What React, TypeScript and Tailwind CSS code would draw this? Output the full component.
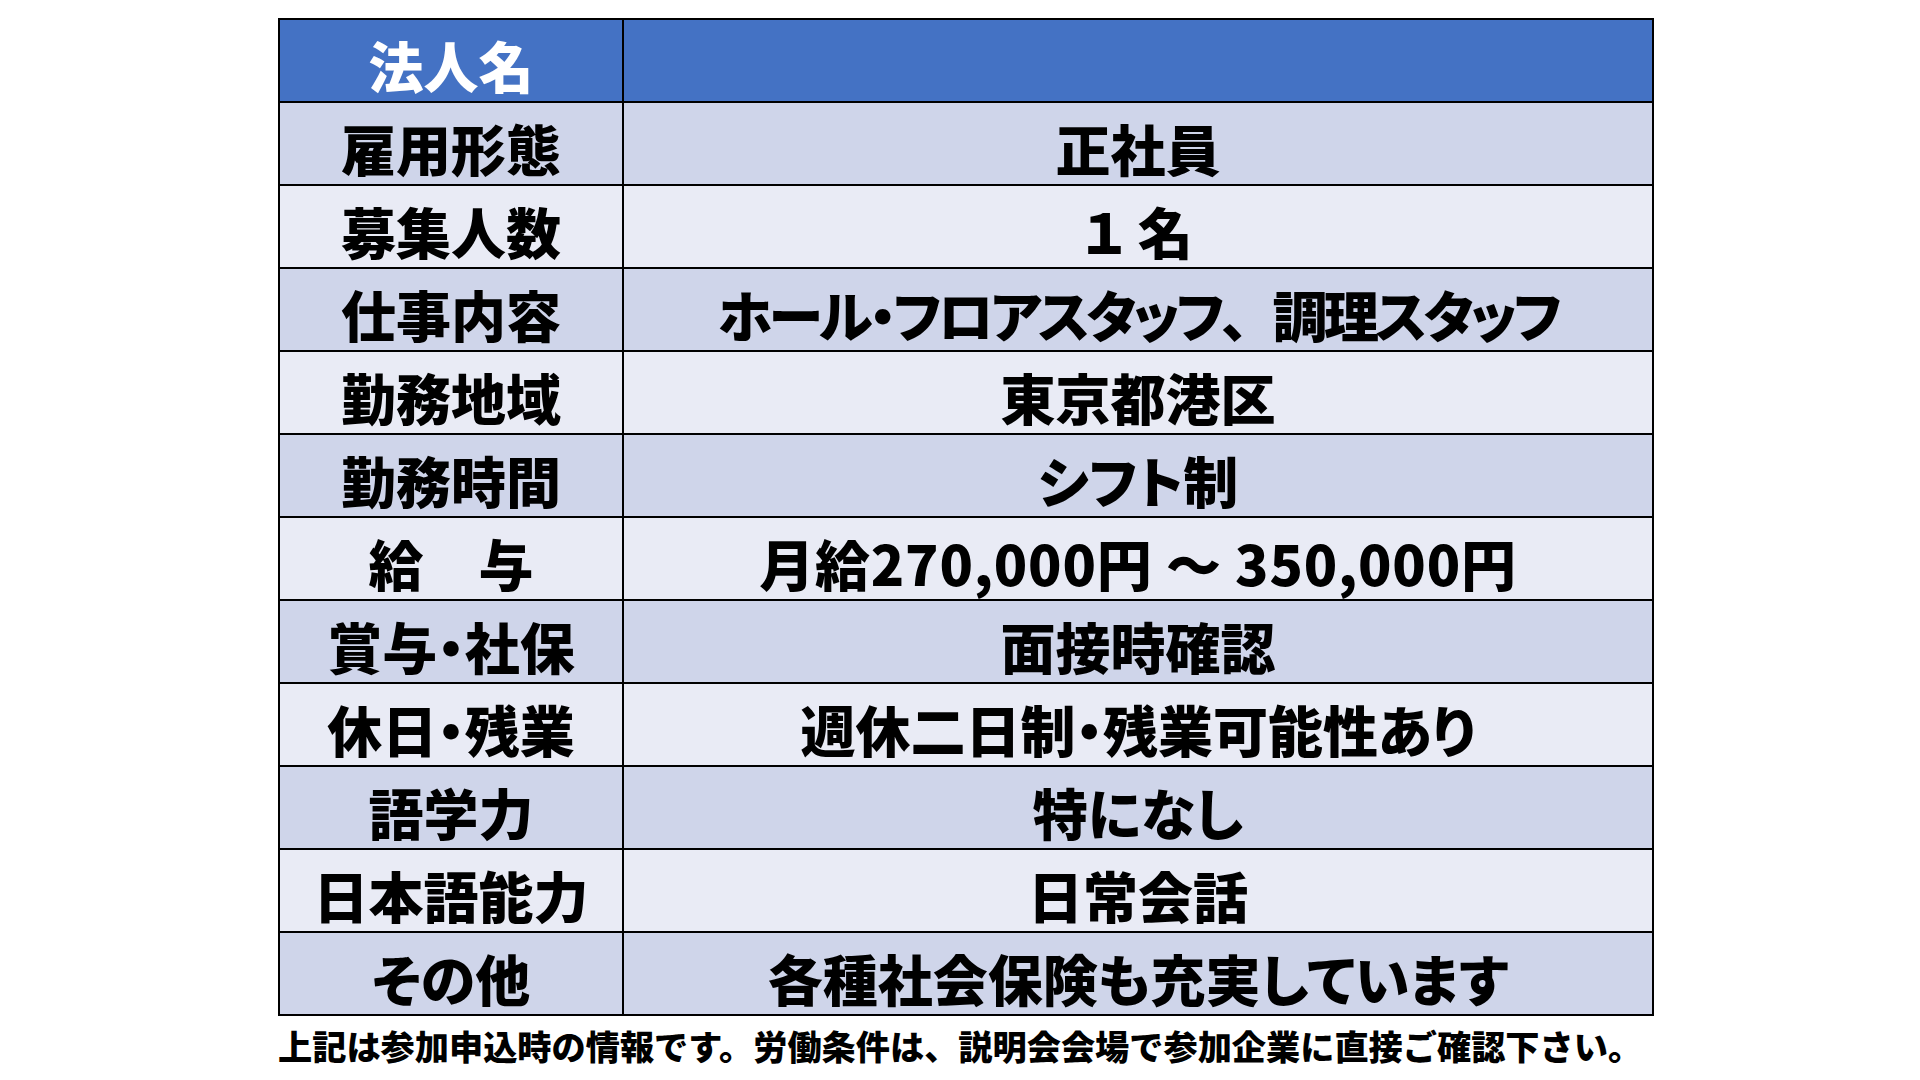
import type { ReactNode } from "react";

const ROWS: { label: string; value: ReactNode; valueClass?: string }[] = [
  { label: "雇用形態", value: "正社員" },
  { label: "募集人数", value: "１ 名" },
  {
    label: "仕事内容",
    value: (
      <>
        ホール・フロアスタッフ<span className="[font-feature-settings:normal]">、</span>調理スタッフ
      </>
    ),
    valueClass: "tracking-[-3.5px]",
  },
  { label: "勤務地域", value: "東京都港区" },
  { label: "勤務時間", value: "シフト制" },
  { label: "給　与", value: "月給270,000円 ～ 350,000円", valueClass: "tracking-[0.8px]" },
  { label: "賞与・社保", value: "面接時確認" },
  { label: "休日・残業", value: "週休二日制・残業可能性あり" },
  { label: "語学力", value: "特になし" },
  { label: "日本語能力", value: "日常会話" },
  { label: "その他", value: "各種社会保険も充実しています" },
];

const FONT = "font-['Noto_Sans_CJK_JP','Noto_Sans',sans-serif]";
const CELL = "border-2 border-black text-center text-black text-[55px] font-black leading-none pt-[8px] whitespace-nowrap";

export default function App() {
  return (
    <div className={`w-[1920px] h-[1080px] bg-white ${FONT} [font-feature-settings:'palt']`}>
      <div className="ml-[278px] pt-[18px] w-[1376px]">
        <table className="w-full border-collapse table-fixed">
          <colgroup>
            <col className="w-[344px]" />
            <col />
          </colgroup>
          <tbody>
            <tr className="h-[83px] bg-[#4472c4]">
              <td className="border-2 border-black text-center text-white text-[55px] font-black leading-none pt-[8px]">
                法人名
              </td>
              <td className="border-2 border-black" />
            </tr>
            {ROWS.map((row, i) => (
              <tr
                key={row.label}
                className={`h-[83px] ${i % 2 === 0 ? "bg-[#cfd5ea]" : "bg-[#e9ebf5]"}`}
              >
                <td className={CELL}>{row.label}</td>
                <td className={`${CELL} ${row.valueClass ?? ""}`}>{row.value}</td>
              </tr>
            ))}
          </tbody>
        </table>
        <p className="mt-[8px] text-[34.2px] font-black text-black leading-tight whitespace-nowrap [font-feature-settings:normal]">
          上記は参加申込時の情報です。労働条件は、説明会会場で参加企業に直接ご確認下さい。
        </p>
      </div>
    </div>
  );
}
